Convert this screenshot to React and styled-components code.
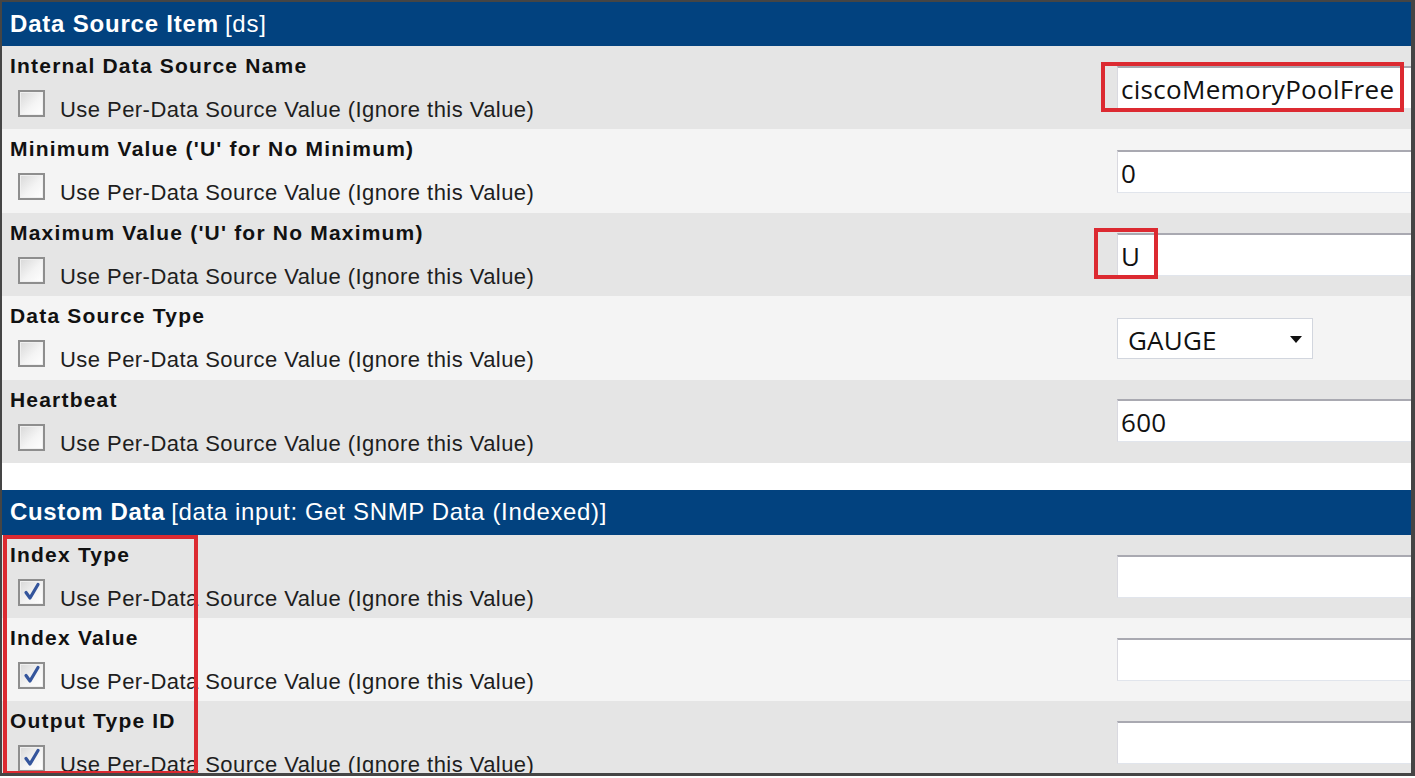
import styled, { createGlobalStyle } from "styled-components";

const GlobalStyle = createGlobalStyle`
	html, body {
		margin: 0;
		padding: 0;
		background: #ffffff;
	}
	body {
		font-family: "Liberation Sans", Arial, sans-serif;
	}
`;

const Frame = styled.div`
	box-sizing: border-box;
	width: 1415px;
	height: 776px;
	overflow: hidden;
	border-style: solid;
	border-color: #454545;
	border-width: 2px 4px 3px 2px;
	background: #ffffff;
	position: relative;
`;

const SectionHeader = styled.div`
	height: ${(p) => p.$height}px;
	background: #02427f;
	color: #ffffff;
	display: flex;
	align-items: center;
	padding-left: 8px;
	font-size: 24px;
	letter-spacing: ${(p) => p.$spacing || 0.8}px;
	white-space: nowrap;

	& b {
		font-weight: 700;
	}
	& span {
		font-weight: 400;
		margin-left: 6px;
	}
`;

const Section = styled.div`
	position: relative;
`;

const Row = styled.div`
	display: flex;
	height: ${(p) => p.$height || 83.4}px;
	background: ${(p) => (p.$alt ? "#f4f4f4" : "#e5e5e5")};
	overflow: hidden;
`;

const LeftCol = styled.div`
	flex: 1;
	padding: 8px 0 0 8px;
`;

const Label = styled.div`
	font-weight: 700;
	font-size: 21px;
	line-height: 24px;
	letter-spacing: 1.2px;
	color: #111111;
	white-space: nowrap;
`;

const CheckLine = styled.div`
	display: flex;
	align-items: flex-start;
	margin-top: 12px;
	margin-left: 8px;
`;

const Box = styled.span`
	box-sizing: border-box;
	width: 27px;
	height: 27px;
	flex: none;
	border: 2px solid #8e8e8e;
	background: linear-gradient(135deg, #d8d8d8 0%, #f4f4f4 55%, #ffffff 100%);
	box-shadow: inset 0 0 0 1px #f0f0f0;
	display: flex;
	align-items: center;
	justify-content: center;
`;

const CheckText = styled.span`
	margin: 8px 0 0 15px;
	font-size: 22px;
	line-height: 24px;
	letter-spacing: 0.45px;
	color: #1e1e1e;
	white-space: nowrap;
`;

const RightCol = styled.div`
	width: 294px;
	flex: none;
	padding-top: ${(p) => p.$top || 21}px;
	position: relative;
`;

const TextInput = styled.div`
	box-sizing: border-box;
	width: 420px;
	height: 43px;
	background: #ffffff;
	border-top: 2px solid #a9a9b1;
	border-left: 1px solid #d9d9e0;
	border-bottom: 1px solid #e1e5ec;
	padding: 2px 0 0 3px;
	display: flex;
	align-items: center;
	font-family: "Open Sans", "Noto Sans", sans-serif;
	font-size: 26px;
	letter-spacing: 0.3px;
	color: #111111;
	white-space: nowrap;
`;

const Select = styled.div`
	box-sizing: border-box;
	width: 196px;
	height: 41px;
	background: #ffffff;
	border: 1px solid #d2d6de;
	display: flex;
	align-items: center;
	justify-content: space-between;
	padding: 2px 10px 0 10px;
	font-family: "Open Sans", "Noto Sans", sans-serif;
	font-size: 26px;
	letter-spacing: 0.2px;
	color: #111111;
`;

const Arrow = styled.span`
	width: 0;
	height: 0;
	border-left: 6px solid transparent;
	border-right: 6px solid transparent;
	border-top: 7px solid #111111;
`;

const Highlight = styled.div`
	position: absolute;
	box-sizing: border-box;
	border: ${(p) => p.$thick || 3}px solid #dc2a31;
	left: ${(p) => p.$left}px;
	top: ${(p) => p.$top}px;
	width: ${(p) => p.$width}px;
	height: ${(p) => p.$height}px;
	pointer-events: none;
`;

const Gap = styled.div`
	height: 27px;
	background: #ffffff;
`;

const Check = () => (
	<svg width="20" height="20" viewBox="0 0 20 20">
		<path
			d="M4 10.5 L8 16 L16 2.5"
			fill="none"
			stroke="#34559c"
			strokeWidth="3.2"
			strokeLinejoin="round"
			strokeLinecap="round"
		/>
	</svg>
);

const CheckRow = ({ checked }) => (
	<CheckLine>
		<Box>{checked && <Check />}</Box>
		<CheckText>Use Per-Data Source Value (Ignore this Value)</CheckText>
	</CheckLine>
);

const dsRows = [
	{ label: "Internal Data Source Name", value: "ciscoMemoryPoolFree", top: 20 },
	{ label: "Minimum Value ('U' for No Minimum)", value: "0", top: 21 },
	{ label: "Maximum Value ('U' for No Maximum)", value: "U", top: 20 },
	{ label: "Data Source Type", select: "GAUGE", top: 22 },
	{ label: "Heartbeat", value: "600", top: 19 },
];

const customRows = ["Index Type", "Index Value", "Output Type ID"];

export default function App() {
	return (
		<>
			<GlobalStyle />
			<Frame>
				<Section>
					<SectionHeader $height={44}>
						<b>Data Source Item</b>
						<span>[ds]</span>
					</SectionHeader>
					{dsRows.map((r, i) => (
						<Row key={r.label} $alt={i % 2 === 1}>
							<LeftCol>
								<Label>{r.label}</Label>
								<CheckRow />
							</LeftCol>
							<RightCol $top={r.top}>
								{r.select ? (
									<Select>
										{r.select}
										<Arrow />
									</Select>
								) : (
									<TextInput>{r.value}</TextInput>
								)}
								{i === 0 && (
									<Highlight $left={-16} $top={16} $width={303} $height={50} $thick={4} />
								)}
								{i === 2 && (
									<Highlight $left={-23} $top={15} $width={64} $height={51} $thick={4} />
								)}
							</RightCol>
						</Row>
					))}
				</Section>
				<Gap />
				<Section>
					<SectionHeader $height={45} $spacing={0.65}>
						<b>Custom Data</b>
						<span>[data input: Get SNMP Data (Indexed)]</span>
					</SectionHeader>
					{customRows.map((label, i) => (
						<Row key={label} $alt={i % 2 === 1} $height={83}>
							<LeftCol>
								<Label>{label}</Label>
								<CheckRow checked />
							</LeftCol>
							<RightCol $top={20}>
								<TextInput />
							</RightCol>
						</Row>
					))}
					<Highlight $left={1} $top={45} $width={195} $height={240} $thick={4} />
				</Section>
			</Frame>
		</>
	);
}
